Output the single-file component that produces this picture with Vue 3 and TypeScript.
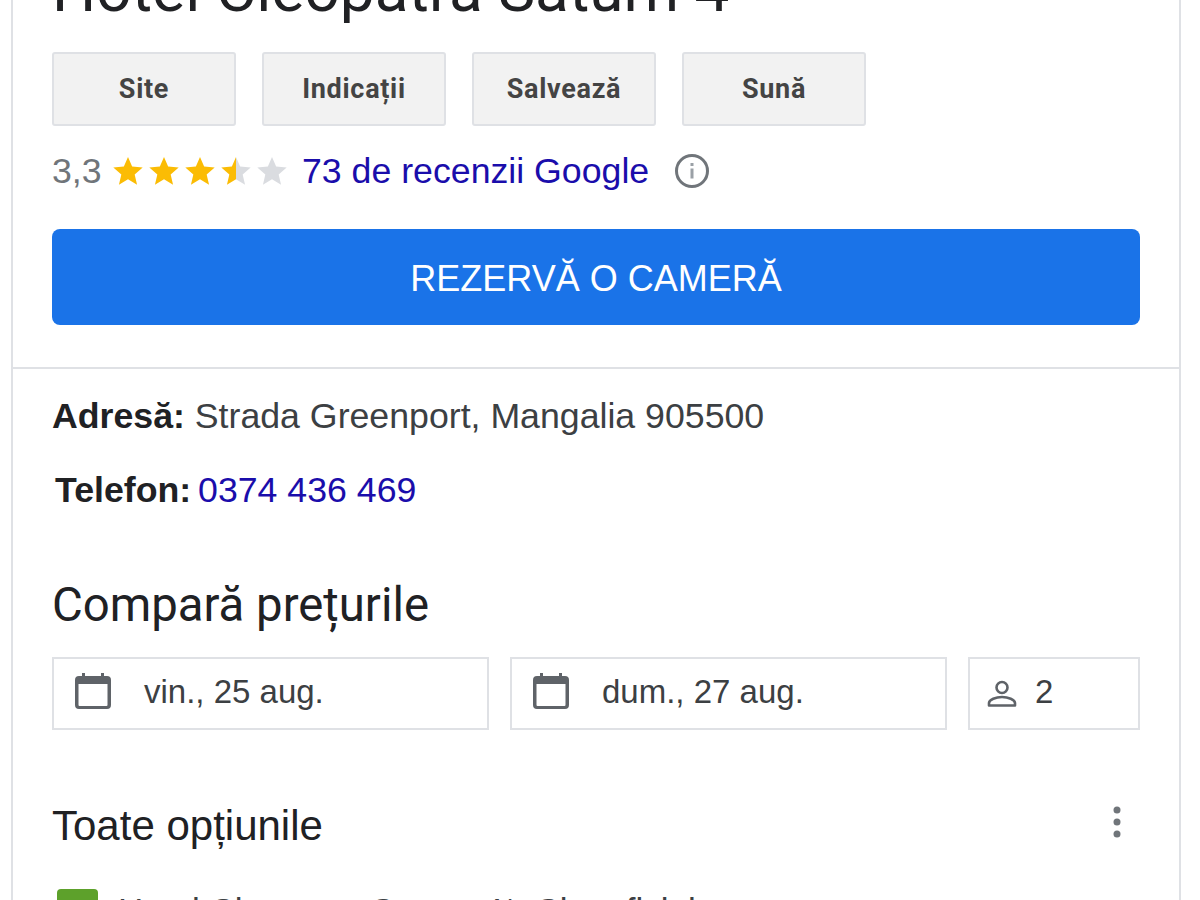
<script setup lang="ts">
const actions: string[] = ['Site', 'Indicații', 'Salvează', 'Sună']
const dates: string[] = ['vin., 25 aug.', 'dum., 27 aug.']
const stars: number[] = [0, 1, 2]
</script>

<template>
  <div class="page">
    <div class="card">
      <section class="head">
        <h1 class="title">Hotel Cleopatra Saturn 4</h1>
        <div class="actions">
          <button v-for="a in actions" :key="a" class="action">{{ a }}</button>
        </div>
        <div class="rating">
          <span class="score">3,3</span>
          <span class="stars">
            <svg v-for="s in stars" :key="s" class="star" viewBox="0 0 24 24"><path fill="#fbbc04" d="M12 1.500l3.100 7.200 7.900.7-6 5.200 1.800 7.700L12 18.200l-6.800 4.100L7 14.600 1 9.400l7.900-.7z"/></svg>
            <svg class="star" viewBox="0 0 24 24">
              <path fill="#dadce0" d="M12 1.500l3.100 7.200 7.900.7-6 5.200 1.800 7.700L12 18.200z"/>
              <path fill="#fbbc04" d="M12 1.500L8.900 8.700 1 9.400l6 5.200-1.800 7.700L12 18.200z"/>
            </svg>
            <svg class="star" viewBox="0 0 24 24"><path fill="#dadce0" d="M12 1.500l3.100 7.200 7.900.7-6 5.200 1.800 7.700L12 18.200l-6.800 4.100L7 14.600 1 9.400l7.900-.7z"/></svg>
          </span>
          <a class="link reviews">73 de recenzii Google</a>
          <svg class="info" viewBox="0 0 36 36">
            <circle cx="18" cy="18" r="15.500" fill="none" stroke="#70757a" stroke-width="3"/>
            <rect x="16.500" y="15.500" width="3" height="10" fill="#9aa0a6"/>
            <rect x="16.500" y="10" width="3" height="3" fill="#9aa0a6"/>
          </svg>
        </div>
        <button class="book">REZERVĂ O CAMERĂ</button>
      </section>
      <section class="details">
        <div class="line address"><b>Adresă:</b> Strada Greenport, Mangalia 905500</div>
        <div class="line phone"><b>Telefon:</b> <a class="link">0374 436 469</a></div>
        <h2 class="compare">Compară prețurile</h2>
        <div class="fields">
          <div v-for="d in dates" :key="d" class="field date">
            <svg class="cal" viewBox="0 0 36 36">
              <path fill="#5f6368" d="M7 0h3v3h16V0h3v3h3a4 4 0 0 1 4 4v25a4 4 0 0 1-4 4H4a4 4 0 0 1-4-4V7a4 4 0 0 1 4-4h3zM3.500 11v21a1 1 0 0 0 1 1h27a1 1 0 0 0 1-1V11z"/>
            </svg>
            <span>{{ d }}</span>
          </div>
          <div class="field guests">
            <svg class="person" viewBox="0 0 30 28" fill="none" stroke="#5f6368" stroke-width="2.600">
              <circle cx="15" cy="7.500" r="5.500"/>
              <path d="M2 25.500v-2.500c0-3.500 7-6 13-6s13 2.500 13 6v2.500z" stroke-linejoin="round"/>
            </svg>
            <span>2</span>
          </div>
        </div>
        <div class="options-head">
          <h3 class="options">Toate opțiunile</h3>
          <svg class="more" viewBox="0 0 8 32"><circle cx="4" cy="4" r="3.500"/><circle cx="4" cy="16" r="3.500"/><circle cx="4" cy="28" r="3.500"/></svg>
        </div>
        <div class="offer">
          <span class="ad"></span>
          <span class="offer-text">Hotel Cleopatra Saturn 4*, Site oficial</span>
        </div>
      </section>
    </div>
  </div>
</template>

<style>
html, body { margin: 0; background: #fff; overflow: hidden; }
</style>

<style scoped>
.page {
  height: 900px;
  overflow: hidden;
  padding: 0 19px 0 11px;
  box-sizing: border-box;
  font-family: "Liberation Sans", Arial, sans-serif;
  color: #202124;
}
.card {
  border-left: 2px solid #dfe1e5;
  border-right: 2px solid #dfe1e5;
  margin-top: -44px;
  height: 1000px;
}
.head {
  padding: 0 39px 42px;
  border-bottom: 2px solid #dfe1e5;
}
.title {
  margin: 0;
  height: 96px;
  line-height: 68px;
  font-family: Roboto, sans-serif;
  font-size: 62px;
  font-weight: 400;
  letter-spacing: 0.1px;
  white-space: nowrap;
}
.actions {
  display: flex;
  gap: 26px;
}
.action {
  width: 184px;
  height: 74px;
  box-sizing: border-box;
  background: #f2f2f2;
  border: 2px solid #dfe1e5;
  border-radius: 3px;
  font-family: Roboto, sans-serif;
  font-size: 27px;
  font-weight: 700;
  letter-spacing: 0.7px;
  color: #444;
  padding: 0;
}
.rating {
  display: flex;
  align-items: center;
  height: 90px;
  margin-bottom: 13px;
  font-size: 35.700px;
}
.score { color: #70757a; width: 60px; }
.stars { display: flex; width: 190px; gap: 4px; }
.star { width: 32px; height: 32px; flex: none; }
.link { color: #1a0dab; }
.reviews { margin-right: 25px; }
.info { width: 36px; height: 36px; }
.book {
  display: block;
  width: 100%;
  height: 96px;
  background: #1a73e8;
  border: 0;
  border-radius: 8px;
  color: #fff;
  font-family: "Liberation Sans", Arial, sans-serif;
  font-size: 36px;
  padding: 3px 0 0;
}
.details { padding: 0 39px; }
.line { font-size: 35.700px; line-height: 38px; color: #3c4043; }
.line b { color: #202124; }
.address { margin-top: 28px; }
.phone { margin-top: 36px; padding-left: 3px; }
.phone .link { margin-left: -3px; }
.compare {
  margin: 70px 0 0;
  font-size: 47.300px;
  font-weight: 400;
  line-height: 52px;
  font-family: Roboto, sans-serif;
}
.fields {
  display: flex;
  gap: 21px;
  margin-top: 26px;
}
.field {
  height: 73px;
  box-sizing: border-box;
  border: 2px solid #dfe1e5;
  display: flex;
  align-items: center;
  font-size: 33px;
  color: #3c4043;
  padding-bottom: 4px;
}
.date { flex: 0 0 437px; padding-left: 21px; }
.date span { margin-left: 33px; }
.cal { width: 36px; height: 36px; flex: none; margin-top: -2px; }
.guests { flex: 1; padding-left: 17px; }
.guests span { margin-left: 18px; }
.person { width: 30px; height: 28px; flex: none; margin-top: 5px; }
.options-head {
  display: flex;
  justify-content: space-between;
  align-items: center;
  margin-top: 72px;
  padding-right: 19px;
}
.options {
  margin: 0;
  font-size: 42px;
  font-weight: 400;
  line-height: 48px;
}
.more { width: 8px; height: 32px; fill: #70757a; margin-bottom: 8px; }
.offer {
  display: flex;
  align-items: flex-start;
  margin-top: 39px;
  padding-left: 5px;
}
.ad {
  width: 41px;
  height: 40px;
  border-radius: 4px;
  background: #5da12b;
}
.offer-text {
  margin-left: 20px;
  margin-top: 2px;
  font-size: 35px;
  color: #3c4043;
}
</style>
